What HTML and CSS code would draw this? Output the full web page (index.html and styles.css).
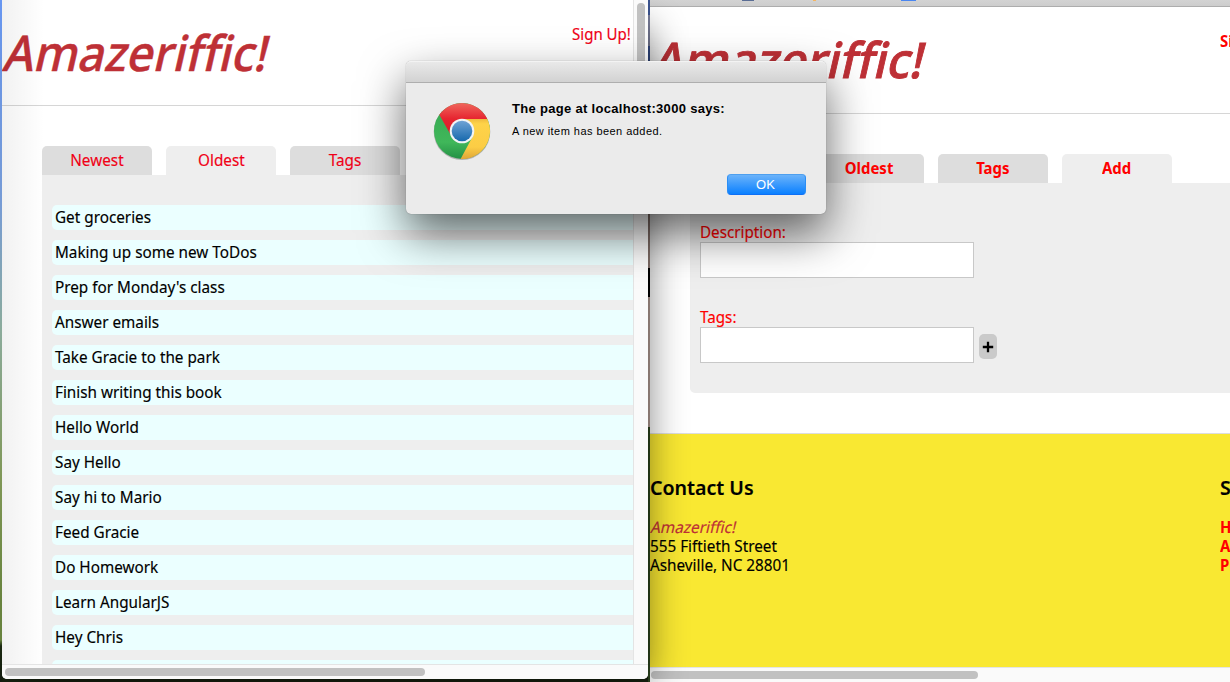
FILE: index.html
```html
<!DOCTYPE html>
<html lang="en">
<head>
<meta charset="utf-8">
<title>Amazeriffic</title>
<link rel="stylesheet" href="styles.css">
</head>
<body>
<div class="desktop">
  <section class="window window-right">
    <div class="toolbar"><i class="fav navy"></i><i class="fav orange"></i><i class="fav blue"></i></div>
    <div class="page page-right">
      <header class="header">
        <h1 class="brand"><span class="fit brand-text">Amazeriffic!</span></h1>
        <a class="signup"><b class="fit">Sign Up!</b></a>
      </header>
      <nav class="tabs bold">
        <a class="tab"><span class="fit">Newest</span></a>
        <a class="tab"><span class="fit">Oldest</span></a>
        <a class="tab"><span class="fit">Tags</span></a>
        <a class="tab active"><span class="fit">Add</span></a>
      </nav>
      <div class="panel form">
        <label class="label"><span class="fit">Description:</span></label>
        <div class="row"><div class="input"></div></div>
        <label class="label"><span class="fit">Tags:</span></label>
        <div class="row"><div class="input"></div><span class="plus"><svg width="12" height="12" viewBox="0 0 12 12"><path d="M6 .8v10.400M.8 6h10.400" stroke="#000" stroke-width="2.300"/></svg></span></div>
      </div>
      <footer class="footer">
        <div class="col contact">
          <h2><span class="fit">Contact Us</span></h2>
          <p class="line brand-small"><span class="fit">Amazeriffic!</span></p>
          <p class="line"><span class="fit">555 Fiftieth Street</span></p>
          <p class="line"><span class="fit">Asheville, NC 28801</span></p>
        </div>
        <div class="col links">
          <h2><span class="fit">Site</span></h2>
          <p class="line"><b class="fit">Home</b></p>
          <p class="line"><b class="fit">About</b></p>
          <p class="line"><b class="fit">Privacy</b></p>
        </div>
      </footer>
    </div>
    <div class="hscroll"><div class="hthumb"></div></div>
  </section>

  <div class="sliver"><i class="s1"></i><i class="s2"></i><i class="s3"></i><i class="s4"></i><i class="s5"></i><i class="s6"></i><i class="s7"></i></div>

  <section class="window window-left">
    <div class="viewport">
      <div class="page page-left">
        <header class="header">
          <h1 class="brand"><span class="fit brand-text">Amazeriffic!</span></h1>
          <a class="signup"><span class="fit">Sign Up!</span></a>
        </header>
        <nav class="tabs">
          <a class="tab"><span class="fit">Newest</span></a>
          <a class="tab active"><span class="fit">Oldest</span></a>
          <a class="tab"><span class="fit">Tags</span></a>
        </nav>
        <ul class="panel list">
          <li><span class="fit">Get groceries</span></li>
          <li><span class="fit">Making up some new ToDos</span></li>
          <li><span class="fit">Prep for Monday's class</span></li>
          <li><span class="fit">Answer emails</span></li>
          <li><span class="fit">Take Gracie to the park</span></li>
          <li><span class="fit">Finish writing this book</span></li>
          <li><span class="fit">Hello World</span></li>
          <li><span class="fit">Say Hello</span></li>
          <li><span class="fit">Say hi to Mario</span></li>
          <li><span class="fit">Feed Gracie</span></li>
          <li><span class="fit">Do Homework</span></li>
          <li><span class="fit">Learn AngularJS</span></li>
          <li><span class="fit">Hey Chris</span></li>
          <li></li>
        </ul>
      </div>
      <div class="vscroll"><div class="vthumb"></div></div>
    </div>
    <div class="hscroll"><div class="hthumb"></div></div>
  </section>

  <section class="dialog">
    <div class="titlebar"></div>
    <div class="dialog-body">
      <svg class="chrome" width="60" height="60" viewBox="0 0 60 60">
        <defs>
          <linearGradient id="r" x1="0" y1="0" x2="0" y2="1"><stop offset="0" stop-color="#f0665c"/><stop offset=".5" stop-color="#e62530"/><stop offset="1" stop-color="#d81f29"/></linearGradient>
          <linearGradient id="g" x1="0" y1="0" x2="0" y2="1"><stop offset="0" stop-color="#35a851"/><stop offset=".7" stop-color="#40b75a"/><stop offset="1" stop-color="#249045"/></linearGradient>
          <linearGradient id="y" x1="0" y1="0" x2="0" y2="1"><stop offset="0" stop-color="#efbb3e"/><stop offset=".12" stop-color="#fed349"/><stop offset=".7" stop-color="#fccd45"/><stop offset="1" stop-color="#e0a638"/></linearGradient>
          <linearGradient id="b" x1="0" y1="0" x2="0" y2="1"><stop offset="0" stop-color="#6fa3d5"/><stop offset="1" stop-color="#1769ad"/></linearGradient>
        </defs>
        <circle cx="30" cy="30.8" r="28.3" fill="#000" opacity=".25"/>
        <circle cx="30" cy="30" r="28" fill="url(#g)"/>
        <path d="M30 18H55.3A28 28 0 0 1 28.6 58L40.4 36Z" fill="url(#y)"/>
        <path d="M7.300 13.700A28 28 0 0 1 55.300 18H30L18.500 33.500Z" fill="url(#r)"/>
        <circle cx="30" cy="30" r="12.3" fill="#f2f4f5"/>
        <circle cx="30" cy="30" r="10.3" fill="url(#b)"/>
      </svg>
      <div class="message">
        <div class="msg-title">The page at localhost:3000 says:</div>
        <div class="msg-text">A new item has been added.</div>
        <button class="ok">OK</button>
      </div>
    </div>
  </section>
</div>
</body>
</html>
```
FILE: styles.css
```css
* { box-sizing: border-box; }
body { margin: 0; font-family: "Noto Sans", "Open Sans", sans-serif; font-size: 16px; color: #000; }
h1, h2, p, ul { margin: 0; padding: 0; }
.desktop { position: relative; width: 1230px; height: 682px; overflow: hidden; background: linear-gradient(90deg, transparent 2px, #16200f 2px), linear-gradient(#6897f2 0, #7aa0dd 200px, #8fb0a0 330px, #839c59 480px, #6b8740 600px, #6b8740 640px, #1c2b12 646px, #141c10 682px); }
.window, .dialog, .sliver { position: absolute; }
.window { overflow: hidden; background: #fff; }
.window-right { left: 650px; top: 0; width: 700px; height: 682px; }
.window-left { left: 2px; top: 0; width: 646px; height: 679px; border-radius: 0 0 5px 5px; box-shadow: 14px 14px 34px -12px rgba(0,0,0,.46); }
.window-left::after { content: ""; position: absolute; left: 0; top: 0; width: 42px; height: 664px; background: linear-gradient(90deg, rgba(0,0,0,.055), rgba(0,0,0,.01) 80%, transparent); }
.toolbar { height: 7px; background: linear-gradient(#d3d3d3, #cdcdcd); border-bottom: 1px solid #adadad; display: flex; }
.fav { height: 1px; width: 12px; }
.navy { margin-left: 92px; background: #5a6d94; }
.orange { margin-left: 59px; width: 3px; background: #f6b560; }
.blue { margin-left: 85px; width: 15px; background: #4a86f0; }
.viewport { display: flex; height: 664px; overflow: hidden; }
.page-left { width: 631px; height: 664px; overflow: hidden; flex: none; }
.page-right { height: 660px; overflow: hidden; }
.fit { display: inline-block; white-space: nowrap; transform: scaleX(.955); transform-origin: 0 50%; -webkit-text-stroke: .15px currentColor; }
.bold .fit, b.fit { transform: scaleX(.935); -webkit-text-stroke: 0; }
.header { display: flex; height: 106px; border-bottom: 1px solid #d6d6d6; }
.page-right .header { height: 107px; }
.brand { width: 570px; flex: none; padding-left: 1px; font: 500 49px/104px "Noto Sans", "Open Sans", sans-serif; color: #be3036; }
.brand-text { transform: skewX(-13deg) scaleX(.95); transform-origin: 0 67%; -webkit-text-stroke: .5px #be3036; font-variant-ligatures: none; }
.page-left .brand { padding-left: 0; }
.page-right .brand-text { transform: skewX(-13deg) scaleX(.975); -webkit-text-stroke: .9px #be3036; }
.signup { padding-top: 23px; line-height: 22px; color: #f00016; white-space: nowrap; }
.page-left .signup .fit { transform: scaleX(.94); }
.tabs { display: flex; gap: 14px; padding: 40px 0 0 40px; }
.tab { width: 110px; height: 29px; flex: none; line-height: 28px; text-align: center; background: #ddd; color: #f00016; border-radius: 5px 5px 0 0; }
.tab .fit { transform-origin: 50% 50%; }
.tab.active { background: #eee; }
.bold { font-weight: 700; }
.page-right .tab, .page-right .signup, .links .line, .label { color: #f00; }
.panel { background: #eee; margin-left: 40px; }
.list { list-style: none; padding: 30px 0 0 10px; height: 560px; display: flex; flex-direction: column; gap: 10px; }
.list li { height: 25px; flex: none; padding-left: 3px; line-height: 24px; background: #ebffff; border-radius: 5px 0 0 5px; }
.form { height: 210px; padding: 39px 10px 0; border-radius: 0 0 0 5px; width: 620px; }
.label { display: block; height: 20px; line-height: 21px; }
.label .fit { transform: scaleX(.95); }
.row { display: flex; align-items: flex-end; height: 65px; padding-bottom: 29px; }
.input { width: 274px; height: 36px; border: 1px solid #c8c8c8; background: #fff; }
.plus { width: 18px; height: 25px; margin: 0 0 4px 5px; border-radius: 5px; background: #cacaca; display: grid; place-items: center; }
.footer { display: flex; height: 235px; margin-top: 40px; border-top: 1px solid #ddd; background: #f9e832; padding-top: 39px; }
.contact { width: 570px; }
.col h2 { font-size: 20.5px; line-height: 28px; font-weight: 600; margin-bottom: 17px; }
.col h2 .fit { transform: scaleX(.955); }
.line { height: 19px; line-height: 19px; }
.brand-small { color: #be3036; }
.brand-small .fit { transform: skewX(-13deg) scaleX(.96); transform-origin: 0 80%; font-variant-ligatures: none; }
.hscroll { height: 15px; border-top: 1px solid #e4e4e4; background: #fafafa; padding: 3px 3px 0; }
.hthumb { width: 420px; height: 8px; border-radius: 4px; background: #c1c1c1; }
.window-right .hscroll { padding-left: 1px; }
.window-right .hthumb { width: 327px; }
.vscroll { width: 15px; border-left: 1px solid #e4e4e4; background: #fafafa; padding: 3px 0 0 3px; }
.vthumb { width: 8px; height: 180px; border-radius: 4px; background: #c1c1c1; }
.sliver { left: 648px; top: 0; width: 2px; height: 682px; display: flex; flex-direction: column; }
.sliver i { flex: none; }
.s1 { height: 15px; background: #3c5490; }
.s2 { height: 31px; background: #7b7f9b; }
.s3 { height: 55px; background: #354e8c; }
.s4 { height: 167px; background: #a08a82; }
.s5 { height: 29px; background: #000; }
.s6 { height: 130px; background: #b39c94; }
.s7 { height: 255px; background: #2c441e; }
.dialog { left: 406px; top: 61px; width: 420px; height: 153px; background: #ebebeb; border-radius: 5px; box-shadow: 0 0 1px rgba(0,0,0,.45), 0 20px 46px rgba(0,0,0,.6); }
.titlebar { height: 22px; background: linear-gradient(#e9e9e9, #d2d2d2); border-top: 1px solid #f3f3f3; border-bottom: 1px solid #aeaeae; border-radius: 5px 5px 0 0; }
.dialog-body { display: flex; padding: 18px 20px 0 26px; font-family: "Liberation Sans", Arial, sans-serif; }
.chrome { flex: none; }
.message { flex: 1; margin-left: 20px; display: flex; flex-direction: column; }
.msg-title { font-size: 13px; font-weight: 700; line-height: 16px; white-space: nowrap; letter-spacing: .31px; }
.msg-text { font-size: 11px; line-height: 14px; margin-top: 7px; letter-spacing: .45px; }
.ok { align-self: flex-end; width: 79px; height: 21px; margin-top: 36px; padding: 0 2px 0 0; border: 1px solid #2b8ef5; border-top-color: #4e9fee; border-bottom-color: #0e6ff5; border-radius: 4px; background: linear-gradient(#6bb3fa, #0a80ff); color: #fff; font: 13px/18px "Liberation Sans", Arial, sans-serif; }
```
